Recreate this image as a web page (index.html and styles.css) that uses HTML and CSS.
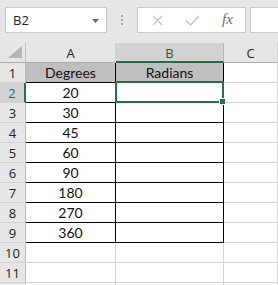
FILE: index.html
```html
<!DOCTYPE html>
<html lang="en">
<head>
    <meta charset="UTF-8">
    <title>Degrees to Radians</title>
    <link rel="stylesheet" href="styles.css">
</head>
<body>
    <!-- Name box and formula bar -->
    <div class="toolbar">
        <div class="name-box">
            <span>B2</span>
            <svg class="drop" width="7" height="4" viewBox="0 0 7 4"><path d="M0 0H7L3.5 4Z" fill="#6a6a6a"/></svg>
        </div>
        <div class="grip">
            <svg width="3" height="11" viewBox="0 0 3 11"><rect x="0" y="0" width="2" height="2" fill="#a8a8a8"/><rect x="0" y="4" width="2" height="2" fill="#a8a8a8"/><rect x="0" y="8" width="2" height="2" fill="#a8a8a8"/></svg>
        </div>
        <div class="fx-buttons">
            <span class="btn">
                <svg width="11" height="11" viewBox="0 0 11 11"><path d="M1 1L10 10M10 1L1 10" stroke="#c2c2c2" stroke-width="1.2" fill="none"/></svg>
            </span>
            <span class="btn">
                <svg width="15" height="11" viewBox="0 0 15 11"><path d="M1 5.5L5.5 10L14 1" stroke="#c2c2c2" stroke-width="1.4" fill="none"/></svg>
            </span>
            <span class="btn fx">fx</span>
        </div>
        <div class="formula-input"></div>
    </div>

    <!-- Worksheet grid -->
    <div class="sheet">
        <div class="corner">
            <svg class="corner-tri" width="14" height="12" viewBox="0 0 14 12"><path d="M14 0V12H0Z" fill="#b5b5b5"/></svg>
        </div>
        <div class="col-head">A</div>
        <div class="col-head sel">B</div>
        <div class="col-head">C</div>

        <div class="row-head">1</div>
        <div class="cell t th">Degrees</div>
        <div class="cell t th">Radians</div>
        <div class="cell"></div>

        <div class="row-head sel">2</div>
        <div class="cell t">20</div>
        <div class="cell t active"></div>
        <div class="cell"></div>

        <div class="row-head">3</div>
        <div class="cell t">30</div>
        <div class="cell t"></div>
        <div class="cell"></div>

        <div class="row-head">4</div>
        <div class="cell t">45</div>
        <div class="cell t"></div>
        <div class="cell"></div>

        <div class="row-head">5</div>
        <div class="cell t">60</div>
        <div class="cell t"></div>
        <div class="cell"></div>

        <div class="row-head">6</div>
        <div class="cell t">90</div>
        <div class="cell t"></div>
        <div class="cell"></div>

        <div class="row-head">7</div>
        <div class="cell t">180</div>
        <div class="cell t"></div>
        <div class="cell"></div>

        <div class="row-head">8</div>
        <div class="cell t">270</div>
        <div class="cell t"></div>
        <div class="cell"></div>

        <div class="row-head">9</div>
        <div class="cell t">360</div>
        <div class="cell t"></div>
        <div class="cell"></div>

        <div class="row-head">10</div>
        <div class="cell"></div>
        <div class="cell"></div>
        <div class="cell"></div>

        <div class="row-head">11</div>
        <div class="cell"></div>
        <div class="cell"></div>
        <div class="cell"></div>

        <!-- partly visible row below the frame -->
        <div class="row-head"></div>
        <div class="cell"></div>
        <div class="cell"></div>
        <div class="cell"></div>
    </div>
</body>
</html>
```

FILE: styles.css
```css
/* Page */
body {
    margin: 0;
    background: #e6e6e6;
    font-family: "Open Sans", sans-serif;
    overflow: hidden;
}

/* Formula bar */
.toolbar {
    display: flex;
    align-items: flex-start;
    height: 43px;
    padding: 7px 0 0 5px;
    box-sizing: border-box;
    overflow: hidden;
}

.name-box {
    display: flex;
    align-items: center;
    justify-content: space-between;
    width: 102px;
    height: 26px;
    padding: 0 7px 0 7px;
    box-sizing: border-box;
    background: #fff;
    border: 1px solid #c6c6c6;
    font-size: 13px;
    color: #222;
}

.name-box .drop {
    margin-top: 1px;
}

.grip {
    display: flex;
    justify-content: center;
    width: 30px;
    padding-top: 8px;
}

.fx-buttons {
    display: flex;
    align-items: center;
    width: 109px;
    height: 26px;
    padding-left: 2px;
    box-sizing: border-box;
    background: #fff;
    border: 1px solid #c6c6c6;
}

.btn {
    display: flex;
    justify-content: center;
    align-items: center;
    width: 35px;
}

.fx {
    font-family: "Liberation Serif", serif;
    font-style: italic;
    font-size: 15px;
    color: #6f6f6f;
    margin-top: -2px;
}

.formula-input {
    flex: 1;
    height: 26px;
    margin-left: 4px;
    margin-right: -10px;
    box-sizing: border-box;
    background: #fff;
    border: 1px solid #c6c6c6;
}

/* Sheet */
.sheet {
    display: grid;
    grid-template-columns: 26px 90px 108px 1fr;
    grid-auto-rows: 20px;
    background: #fff;
}

.sheet > div {
    box-sizing: border-box;
    display: flex;
    align-items: center;
    justify-content: center;
}

.corner {
    position: relative;
    background: #e6e6e6;
    border-right: 1px solid #bdbdbd;
    border-bottom: 1px solid #ababab;
}

.corner-tri {
    position: absolute;
    right: 3px;
    bottom: 4px;
}

.col-head {
    background: #e6e6e6;
    border-right: 1px solid #d0d0d0;
    border-bottom: 1px solid #ababab;
    font-size: 13px;
    color: #222;
    padding-top: 1px;
}

.col-head.sel {
    background: #d2d2d2;
    border-right-color: #b5b5b5;
    border-bottom: 2px solid #217346;
    color: #1e5e3a;
}

.row-head {
    background: #e6e6e6;
    border-right: 1px solid #bdbdbd;
    border-bottom: 1px solid #d4d4d4;
    font-size: 13px;
    color: #222;
}

.row-head.sel {
    background: #d2d2d2;
    border-right: 2px solid #217346;
    color: #217346;
}

.cell {
    border-right: 1px solid #d4d4d4;
    border-bottom: 1px solid #d4d4d4;
    font-family: Lato, sans-serif;
    font-size: 14px;
    color: #111;
}

.cell.t {
    border-right-color: #000;
    border-bottom-color: #000;
}

.cell.th {
    background: #bfbfbf;
}

/* Active cell outline and fill handle */
.cell.active {
    position: relative;
}

.cell.active::before {
    content: "";
    position: absolute;
    top: -2px;
    left: -1px;
    right: -1px;
    bottom: -1px;
    border: 2px solid #217346;
    z-index: 2;
}

.cell.active::after {
    content: "";
    position: absolute;
    right: -3px;
    bottom: -3px;
    width: 5px;
    height: 5px;
    background: #217346;
    border: 1px solid #fff;
    z-index: 3;
}
```
